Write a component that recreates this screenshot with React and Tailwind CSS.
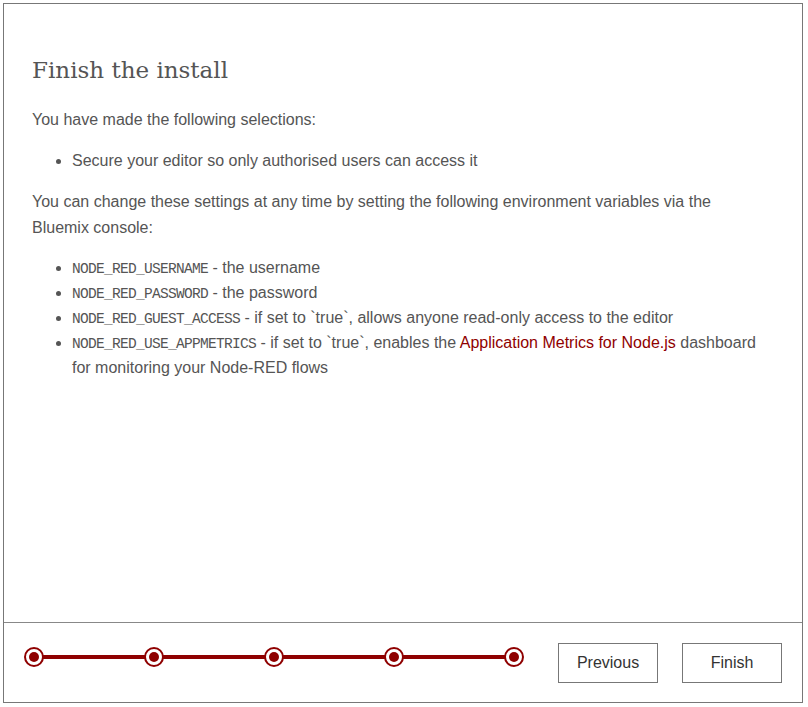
import React from 'react';

const envVars = [
    { name: 'NODE_RED_USERNAME', text: ' - the username' },
    { name: 'NODE_RED_PASSWORD', text: ' - the password' },
    { name: 'NODE_RED_GUEST_ACCESS', text: ' - if set to `true`, allows anyone read-only access to the editor' },
];

const Code = ({ children }) => (
    <code className="text-[14.5px] leading-none tracking-[-0.7px]" style={{ fontFamily: '"Liberation Mono", monospace' }}>
        {children}
    </code>
);

const Stepper = () => {
    const steps = [11, 131, 251, 371, 491];
    return (
        <svg width="502" height="22" viewBox="0 0 502 22" className="block">
            <line x1="11" y1="11" x2="491" y2="11" stroke="#8f0000" strokeWidth="4" />
            {steps.map(cx => (
                <g key={cx}>
                    <circle cx={cx} cy="11" r="9" fill="#fff" stroke="#8f0000" strokeWidth="2" />
                    <circle cx={cx} cy="11" r="5" fill="#8f0000" />
                </g>
            ))}
        </svg>
    );
};

const App = () => {
    return (
        <div className="p-[3px] bg-white" style={{ fontFamily: '"Liberation Sans", Arial, sans-serif' }}>
            <div className="w-[800px] h-[700px] border border-[#777] flex flex-col bg-white">
                {/* Content */}
                <div className="flex-1 pl-[28px] pr-[34px] pt-[51px] text-[16px] text-[#555]">
                    <h2 className="text-[23px] leading-[30px] text-[#555] font-normal" style={{ fontFamily: '"DejaVu Serif", serif' }}>
                        Finish the install
                    </h2>
                    <p className="mt-[22px] leading-[26px]">You have made the following selections:</p>
                    <ul className="list-disc pl-[40px] mt-[15px] leading-[25px]">
                        <li>Secure your editor so only authorised users can access it</li>
                    </ul>
                    <p className="mt-[16px] leading-[26px]">
                        You can change these settings at any time by setting the following environment variables via the Bluemix console:
                    </p>
                    <ul className="list-disc pl-[40px] mt-[14px] leading-[25px]">
                        {envVars.map(v => (
                            <li key={v.name}>
                                <Code>{v.name}</Code>
                                {v.text}
                            </li>
                        ))}
                        <li>
                            <Code>NODE_RED_USE_APPMETRICS</Code>
                            {' - if set to `true`, enables the '}
                            <a className="text-[#8f0000]">Application Metrics for Node.js</a>
                            {' dashboard for monitoring your Node-RED flows'}
                        </li>
                    </ul>
                </div>

                {/* Footer */}
                <div className="h-[80px] border-t border-[#888] flex items-start justify-between pl-[19px] pr-[20px]">
                    <div className="mt-[23px]">
                        <Stepper />
                    </div>
                    <div className="flex gap-[24px] mt-[20px]">
                        <button className="w-[100px] h-[40px] border border-[#777] bg-white text-[#333] text-[16px]">Previous</button>
                        <button className="w-[100px] h-[40px] border border-[#777] bg-white text-[#333] text-[16px]">Finish</button>
                    </div>
                </div>
            </div>
        </div>
    );
};

export default App;
